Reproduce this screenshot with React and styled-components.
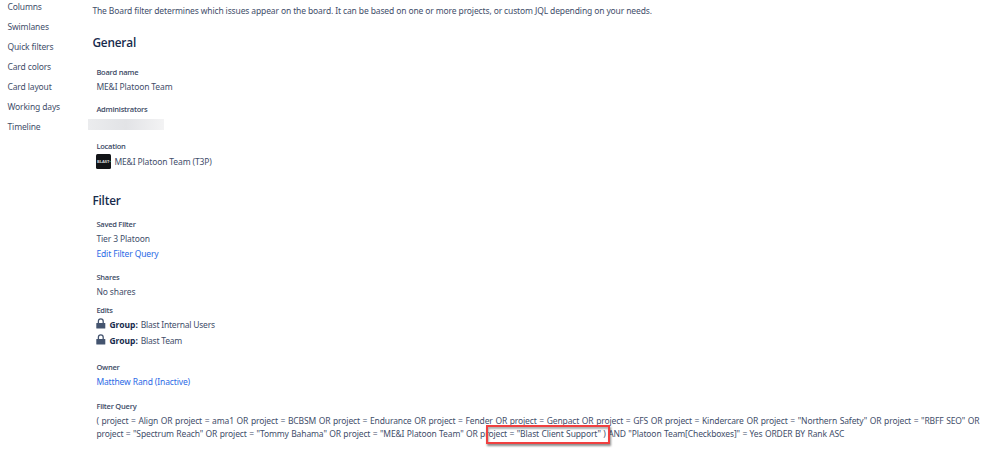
import React from 'react';
import styled, { createGlobalStyle } from 'styled-components';

const navItems = ['Columns', 'Swimlanes', 'Quick filters', 'Card colors', 'Card layout', 'Working days', 'Timeline'];

const editGroups = ['Blast Internal Users', 'Blast Team'];

const queryLines = [
    {
        text: '( project = Align OR project = ama1 OR project = BCBSM OR project = Endurance OR project = Fender OR project = Genpact OR project = GFS OR project = Kindercare OR project = "Northern Safety" OR project = "RBFF SEO" OR',
        spacing: '0.58px',
    },
    {
        text: 'project = "Spectrum Reach" OR project = "Tommy Bahama" OR project = "ME&I Platoon Team" OR project = "Blast Client Support" ) AND "Platoon Team[Checkboxes]" = Yes ORDER BY Rank ASC',
        spacing: '0.4px',
    },
];

function LockIcon() {
    return (
        <LockSvg viewBox="0 0 10 11">
            <path d="M2.4 5.2V3.3a2.4 2.4 0 0 1 4.8 0v1.9" fill="none" stroke="#44546f" strokeWidth="1.3" />
            <rect x="0.3" y="4.9" width="9" height="5.6" rx="0.5" fill="#44546f" />
        </LockSvg>
    );
}

function Field({ label, gap, children }) {
    return (
        <FieldStyled $gap={gap}>
            <Label>{label}</Label>
            {children}
        </FieldStyled>
    );
}

function App() {
    return (
        <>
            <GlobalStyle />
            <Page>
                <Sidebar>
                    {navItems.map((item) => <NavItem key={item}>{item}</NavItem>)}
                </Sidebar>
                <Content>
                    <Intro>The Board filter determines which issues appear on the board. It can be based on one or more projects, or custom JQL depending on your needs.</Intro>

                    <Title $top={14}>General</Title>
                    <Field label="Board name" gap={13}>
                        <Value>ME&amp;I Platoon Team</Value>
                    </Field>
                    <Field label="Administrators" gap={8}>
                        <Redacted />
                    </Field>
                    <Field label="Location" gap={9}>
                        <ProjectRow>
                            <Avatar>BLAST<i>•</i></Avatar>
                            <Value>ME&amp;I Platoon Team (T3P)</Value>
                        </ProjectRow>
                    </Field>

                    <Title $top={21}>Filter</Title>
                    <Field label="Saved Filter" gap={7}>
                        <Value>Tier 3 Platoon</Value>
                        <Link>Edit Filter Query</Link>
                    </Field>
                    <Field label="Shares" gap={9}>
                        <Value>No shares</Value>
                    </Field>
                    <Field label="Edits" gap={4}>
                        {editGroups.map((group) => (
                            <GroupRow key={group}>
                                <LockIcon />
                                <GroupLabel>Group:</GroupLabel>
                                <GroupName>{group}</GroupName>
                            </GroupRow>
                        ))}
                    </Field>
                    <Field label="Owner" gap={12}>
                        <Link>Matthew Rand (Inactive)</Link>
                    </Field>
                    <Field label="Filter Query" gap={10}>
                        <Query>
                            {queryLines.map((line) => (
                                <QueryLine key={line.text} $spacing={line.spacing}>{line.text}</QueryLine>
                            ))}
                            <Highlight />
                        </Query>
                    </Field>
                </Content>
            </Page>
        </>
    );
}

const GlobalStyle = createGlobalStyle`
    * {
        box-sizing: border-box;
    }
    body {
        margin: 0;
        background: #ffffff;
        color: #3f4e6a;
        font-family: "Noto Sans", "Open Sans", sans-serif;
        font-size: 8.5px;
        letter-spacing: -0.13px;
        overflow: hidden;
    }
`;

const Page = styled.div`
    display: flex;
    width: 999px;
    height: 449px;
    overflow: hidden;
`;

const Sidebar = styled.nav`
    display: flex;
    flex-direction: column;
    flex: 0 0 92.4px;
    margin-top: -3px;
    padding-left: 7.5px;
`;

const NavItem = styled.a`
    height: 20px;
    line-height: 20px;
    letter-spacing: -0.14px;
`;

const Content = styled.main`
    flex: 1;
    padding-top: 3px;
    white-space: nowrap;
`;

const Intro = styled.p`
    margin: 0;
    height: 15px;
    line-height: 15px;
`;

const Title = styled.h2`
    margin: ${(p) => p.$top}px 0 0;
    height: 20px;
    line-height: 20px;
    font-family: "Open Sans", "Noto Sans", sans-serif;
    font-size: 11.8px;
    font-weight: 600;
    letter-spacing: -0.18px;
    color: #172b4d;
`;

const FieldStyled = styled.section`
    margin-top: ${(p) => p.$gap}px;
    padding-left: 4px;
`;

const Label = styled.h3`
    margin: 0;
    height: 14px;
    line-height: 14px;
    font-family: "Open Sans", "Noto Sans", sans-serif;
    font-size: 7.5px;
    font-weight: 600;
    letter-spacing: -0.24px;
    color: #3d4b66;
`;

const Value = styled.div`
    height: 15px;
    line-height: 15px;
`;

const Link = styled(Value)`
    color: #2b6ae6;
`;

const Redacted = styled.div`
    width: 76px;
    height: 11px;
    margin: 3px 0 0 -8.4px;
    background: linear-gradient(90deg, #ebecee, #e2e3e6 50%, #f3f3f4);
`;

const ProjectRow = styled.div`
    display: flex;
    align-items: center;
    gap: 3px;
    height: 16px;
`;

const Avatar = styled.div`
    display: flex;
    align-items: center;
    justify-content: center;
    width: 15px;
    height: 15px;
    border-radius: 1.5px;
    background: #121417;
    color: #d5d7da;
    font-size: 4.2px;
    font-weight: 700;
    i {
        color: #2f9fc4;
    }
`;

const GroupRow = styled.div`
    display: flex;
    align-items: center;
    height: 15.5px;
`;

const LockSvg = styled.svg`
    width: 10px;
    height: 11px;
    margin: -2.4px 3px 0 0;
`;

const GroupLabel = styled.b`
    margin-right: 3px;
    font-weight: 700;
    letter-spacing: 0;
    color: #172b4d;
`;

const GroupName = styled(Value)`
    letter-spacing: -0.22px;
`;

const Query = styled.div`
    position: relative;
    padding-top: 0.5px;
`;

const QueryLine = styled.div`
    height: 13px;
    line-height: 13px;
    word-spacing: ${(p) => p.$spacing};
`;

// red callout drawn over the second line of the query
const Highlight = styled.div`
    position: absolute;
    top: 12px;
    left: 390px;
    width: 124px;
    height: 19px;
    border: 2px solid #f04040;
    box-shadow: 1px 2px 2px rgba(0, 0, 0, 0.45), inset 1px 2px 2px rgba(0, 0, 0, 0.3);
`;

export default App;
